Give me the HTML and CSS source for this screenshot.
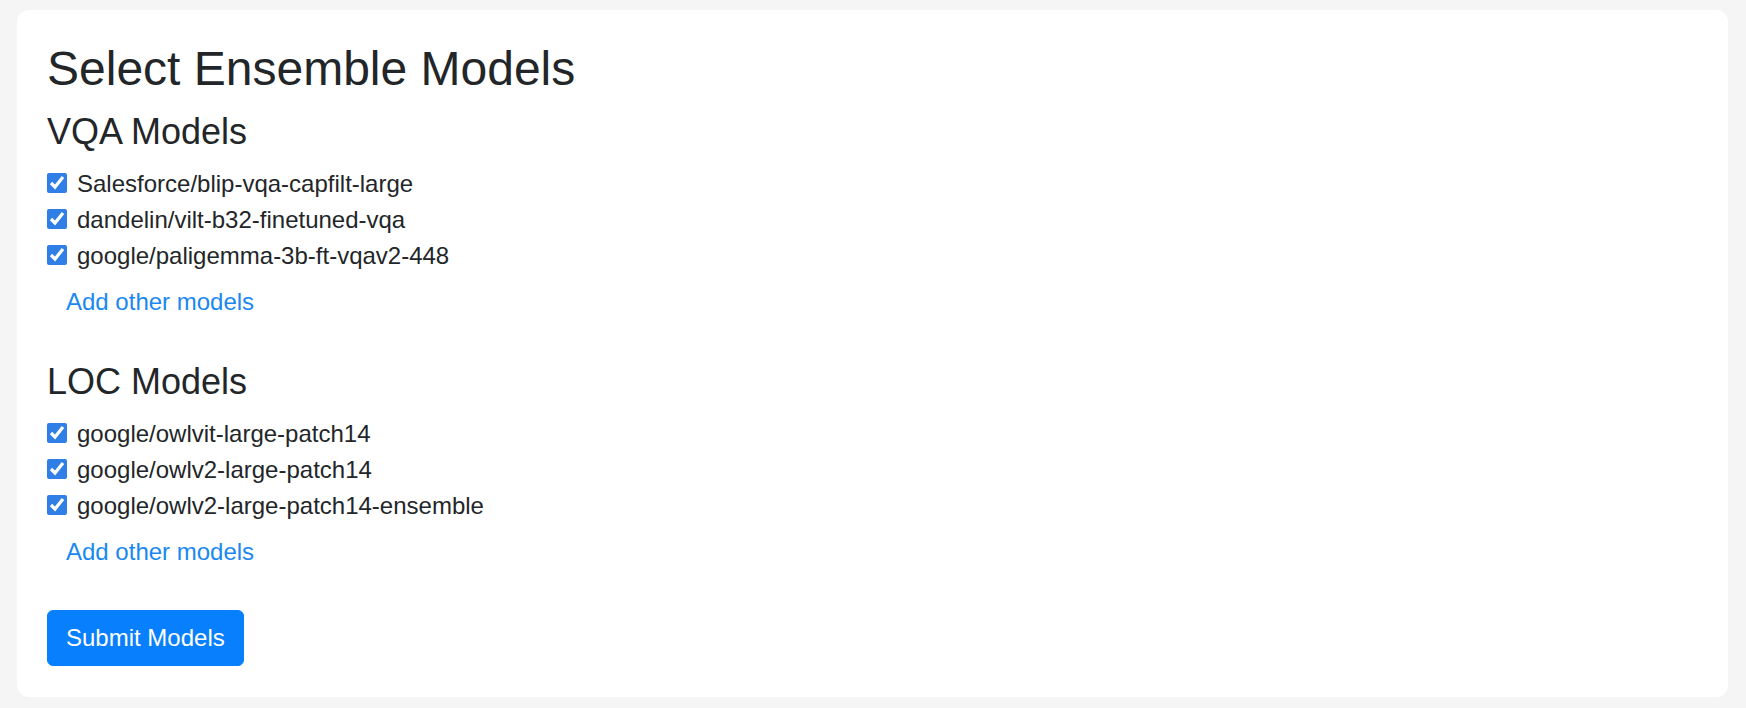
FILE: index.html
```html
<!DOCTYPE html>
<html lang="en">
<head>
<meta charset="utf-8">
<title>Select Ensemble Models</title>
<link rel="stylesheet" href="styles.css">
</head>
<body>
<div class="page">
  <form class="card">
    <h2 class="title">Select Ensemble Models</h2>

    <section class="group">
      <h4 class="group-title">VQA Models</h4>
      <label class="check"><input type="checkbox" checked><span>Salesforce/blip-vqa-capfilt-large</span></label>
      <label class="check"><input type="checkbox" checked><span>dandelin/vilt-b32-finetuned-vqa</span></label>
      <label class="check"><input type="checkbox" checked><span>google/paligemma-3b-ft-vqav2-448</span></label>
      <button type="button" class="link-btn">Add other models</button>
    </section>

    <section class="group">
      <h4 class="group-title">LOC Models</h4>
      <label class="check"><input type="checkbox" checked><span>google/owlvit-large-patch14</span></label>
      <label class="check"><input type="checkbox" checked><span>google/owlv2-large-patch14</span></label>
      <label class="check"><input type="checkbox" checked><span>google/owlv2-large-patch14-ensemble</span></label>
      <button type="button" class="link-btn">Add other models</button>
    </section>

    <button type="button" class="submit">Submit Models</button>
  </form>
</div>
</body>
</html>
```

FILE: styles.css
```css
html, body {
  margin: 0;
  padding: 0;
}

body {
  background: #f5f5f5;
  font-family: "Liberation Sans", Arial, Helvetica, sans-serif;
  color: #232629;
}

.page {
  padding: 10px 18px 11px 17px;
}

.card {
  background: #ffffff;
  border-radius: 12px;
  padding: 30px 30px 31.5px;
  display: flex;
  flex-direction: column;
  align-items: flex-start;
}

.title {
  font-size: 48px;
  font-weight: 400;
  line-height: 1.2;
  margin: 0 0 12px;
}

.group {
  display: flex;
  flex-direction: column;
  align-items: flex-start;
  margin-bottom: 30px;
}

.group-title {
  font-size: 36px;
  font-weight: 400;
  line-height: 1.2;
  margin: 0 0 13px;
}

.check {
  display: flex;
  align-items: flex-start;
  gap: 10.5px;
  font-size: 24px;
  line-height: 36px;
  cursor: pointer;
}

.check input {
  flex-shrink: 0;
  width: 19.5px;
  height: 19.5px;
  margin: 7.5px 0 0 0;
  accent-color: #2f7fe6;
}

.link-btn {
  margin: 0;
  background: none;
  border: 1.5px solid transparent;
  border-radius: 6px;
  padding: 9px 18px;
  font-family: inherit;
  font-size: 24px;
  line-height: 36px;
  color: #1a88f0;
  cursor: pointer;
}

.submit {
  margin: 0;
  background: #087ffd;
  border: 1.5px solid #087ffd;
  border-radius: 6px;
  padding: 9px 18px;
  font-family: inherit;
  font-size: 24px;
  line-height: 36px;
  color: #ffffff;
  cursor: pointer;
}
```
